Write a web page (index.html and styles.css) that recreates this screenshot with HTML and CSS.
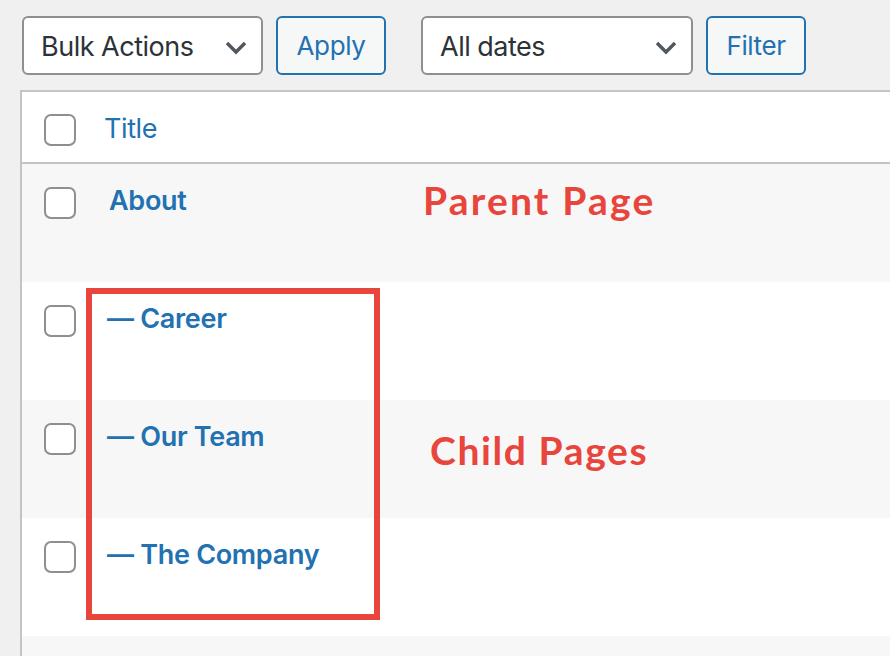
FILE: index.html
```html
<!DOCTYPE html>
<html>
<head>
<meta charset="utf-8">
<link rel="stylesheet" href="styles.css">
</head>
<body>
<div class="page">
  <div class="toolbar">
    <div class="select bulk"><span>Bulk Actions</span>
      <svg class="chev" viewBox="0 0 22 14" width="22" height="14"><path d="M2 2 L11 11 L20 2" fill="none" stroke="#50575e" stroke-width="3.4"/></svg>
    </div>
    <button class="btn apply">Apply</button>
    <div class="select dates"><span>All dates</span>
      <svg class="chev" viewBox="0 0 22 14" width="22" height="14"><path d="M2 2 L11 11 L20 2" fill="none" stroke="#50575e" stroke-width="3.4"/></svg>
    </div>
    <button class="btn filter">Filter</button>
  </div>
  <div class="table">
    <div class="row head">
      <span class="cb"></span>
      <span class="th">Title</span>
    </div>
    <div class="row alt">
      <span class="cb"></span>
      <span class="title parent">About</span>
    </div>
    <div class="row">
      <span class="cb"></span>
      <span class="title">— Career</span>
    </div>
    <div class="row alt">
      <span class="cb"></span>
      <span class="title">— Our Team</span>
    </div>
    <div class="row">
      <span class="cb"></span>
      <span class="title">— The Company</span>
    </div>
    <div class="row alt"></div>
  </div>
  <div class="redbox"></div>
  <div class="note note-parent">Parent Page</div>
  <div class="note note-child">Child Pages</div>
</div>
</body>
</html>
```
FILE: styles.css
```css
html, body {
  margin: 0;
  padding: 0;
  background: #f0f0f1;
  overflow: hidden;
}
body {
  width: 890px;
  height: 656px;
  font-family: Inter, "Noto Sans", sans-serif;
}
.page {
  position: relative;
  width: 890px;
  height: 656px;
  overflow: hidden;
}
.toolbar {
  display: flex;
  align-items: flex-start;
  padding: 16px 0 0 22px;
  height: 74px;
  box-sizing: border-box;
}
.select {
  box-sizing: border-box;
  height: 59px;
  border: 2px solid #8c8f94;
  border-radius: 6px;
  background: #fff;
  display: flex;
  align-items: center;
  justify-content: space-between;
  padding: 0 14px 0 17px;
  font-size: 27px;
  color: #2c3338;
  letter-spacing: -0.5px;
}
.select span { padding-top: 1px; }
.bulk { width: 241px; }
.dates { width: 272px; margin-left: 35px; }
.chev { display: block; margin-top: 4px; }
.btn {
  box-sizing: border-box;
  height: 59px;
  border: 2px solid #2271b1;
  border-radius: 6px;
  background: #f6f7f7;
  color: #2271b1;
  font-family: Inter, "Noto Sans", sans-serif;
  font-size: 26px;
  letter-spacing: -0.4px;
  padding: 0 0 1px;
  margin-left: 13px;
}
.apply { width: 110px; }
.filter { width: 100px; }
.table {
  margin: 16px 0 0 20px;
  width: 900px;
  border-top: 2px solid #c3c4c7;
  border-left: 2px solid #c3c4c7;
  background: #fff;
}
.row {
  display: flex;
  align-items: flex-start;
  height: 118px;
  box-sizing: border-box;
  padding: 23px 0 0 22px;
  background: #fff;
}
.row.alt { background: #f7f7f7; }
.row.head {
  height: 72px;
  padding-top: 22px;
  border-bottom: 2px solid #c3c4c7;
}
.cb {
  box-sizing: border-box;
  width: 32px;
  height: 32px;
  border: 2px solid #8c8f94;
  border-radius: 7px;
  background: #fff;
  flex: none;
}
.th {
  margin-left: 28px;
  font-size: 27px;
  line-height: 30px;
  color: #2271b1;
  letter-spacing: -0.4px;
}
.title {
  margin-left: 31px;
  margin-top: -4px;
  font-size: 27px;
  line-height: 36px;
  font-weight: 600;
  color: #2271b1;
  letter-spacing: -0.3px;
}
.title.parent { margin-left: 33px; }
.redbox {
  position: absolute;
  left: 86px;
  top: 288px;
  width: 294px;
  height: 332px;
  box-sizing: border-box;
  border: 6px solid #e8453c;
}
.note {
  position: absolute;
  font-family: Lato, "Noto Sans", sans-serif;
  font-weight: 700;
  font-size: 39px;
  line-height: 40px;
  letter-spacing: 2.2px;
  color: #e8453c;
}
.note-parent { left: 423px; top: 180px; }
.note-child { left: 430px; top: 430px; letter-spacing: 1.6px; }
```
